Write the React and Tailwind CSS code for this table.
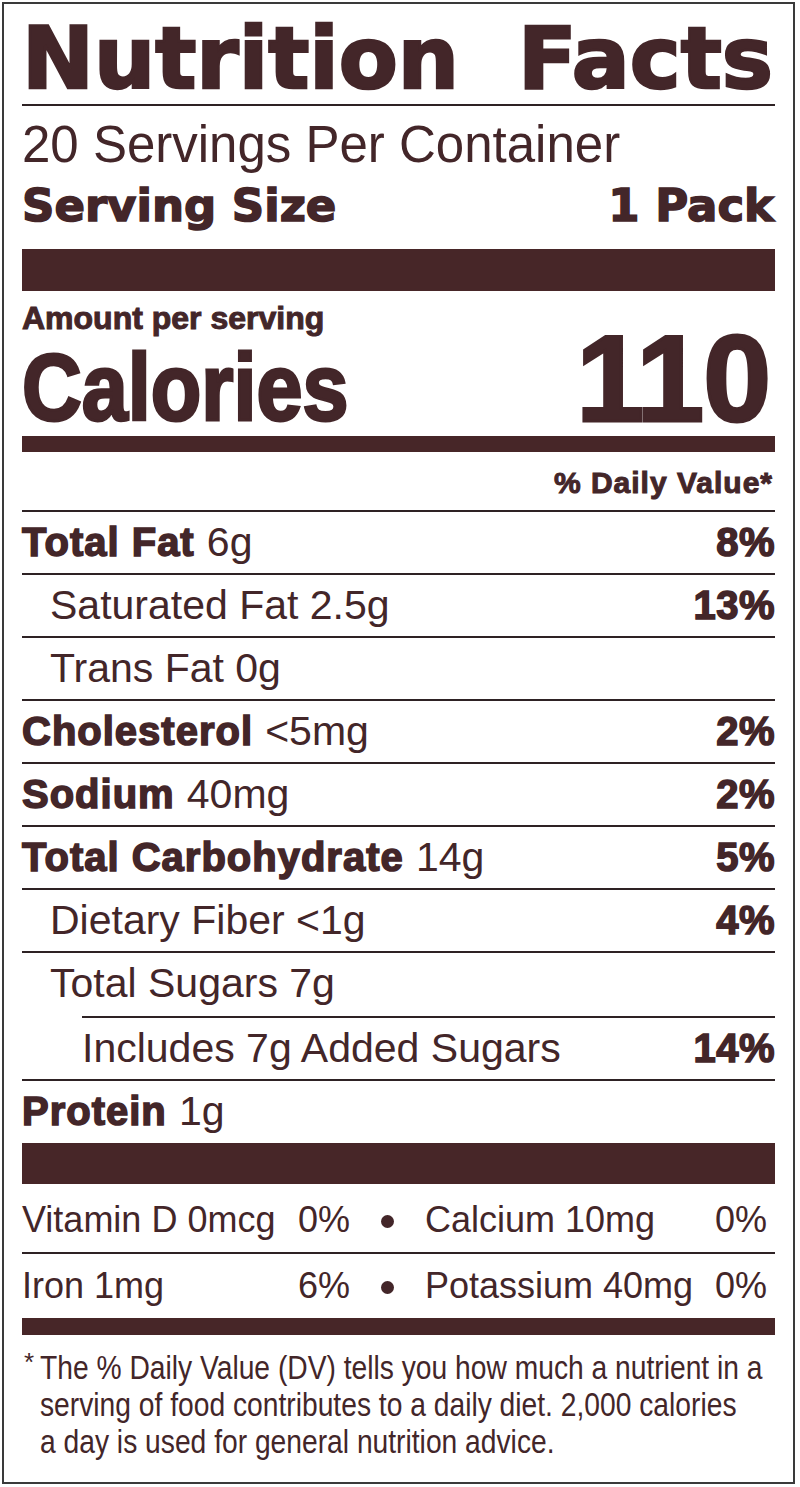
import React from 'react';

const rows = [
  { bold: 'Total Fat', text: '6g', dv: '8%', indent: 0 },
  { text: 'Saturated Fat 2.5g', dv: '13%', indent: 1 },
  { text: 'Trans Fat 0g', indent: 1 },
  { bold: 'Cholesterol', text: '<5mg', dv: '2%', indent: 0 },
  { bold: 'Sodium', text: '40mg', dv: '2%', indent: 0 },
  { bold: 'Total Carbohydrate', text: '14g', dv: '5%', indent: 0 },
  { text: 'Dietary Fiber <1g', dv: '4%', indent: 1 },
  { text: 'Total Sugars 7g', indent: 1, shortLine: true },
  { text: 'Includes 7g Added Sugars', dv: '14%', indent: 2 },
  { bold: 'Protein', text: '1g', indent: 0, last: true },
];

const indents = ['pl-0', 'pl-[28px]', 'pl-[60px]'];

function NutrientRow({ row }) {
  const line = row.last || row.shortLine ? '' : 'border-b-2 border-[#2e2224]';
  return (
    <>
      <div className={`flex items-start justify-between ${row.last ? 'h-[62px]' : 'h-[63px]'} ${line}`}>
        <div className={`${indents[row.indent]} leading-[61px] whitespace-nowrap`}>
          {row.bold && (
            <span className="text-[40px] font-bold tracking-[1px] [-webkit-text-stroke:1.5px_#432629]">
              {row.bold}{' '}
            </span>
          )}
          <span className="text-[41px]">{row.text}</span>
        </div>
        {row.dv && (
          <span className="leading-[61px] text-[40px] font-bold tracking-[0.5px] [-webkit-text-stroke:1.5px_#432629]">
            {row.dv}
          </span>
        )}
      </div>
      {row.shortLine && <div className="ml-[60px] h-[2px] bg-[#2e2224]" />}
    </>
  );
}

function Bullet() {
  return (
    <div className="flex w-[75px] items-center justify-center">
      <div className="mt-[2px] h-[13px] w-[13px] rounded-full bg-[#432629]" />
    </div>
  );
}

export default function App() {
  return (
    <div className="min-h-screen bg-white">
      <div className="ml-[2px] mt-[2px] h-[1482px] w-[793px] overflow-hidden border-2 border-[#3a3a3a] px-[18px] font-['Liberation_Sans',sans-serif] text-[#432629]">
        {/* heading */}
        <div className="flex justify-between border-b-2 border-[#2e2224] pt-[8px] font-['DejaVu_Sans',sans-serif] text-[86px] font-bold leading-[92px] [-webkit-text-stroke:2.5px_#432629]">
          <span>Nutrition</span>
          <span className="pr-[2px]">Facts</span>
        </div>

        <div className="pt-[9px] pb-[12px]">
          <div className="text-[51px] leading-[60px] whitespace-nowrap">20 Servings Per Container</div>
          <div className="flex justify-between font-['DejaVu_Sans',sans-serif] text-[45px] font-bold leading-[62px] [-webkit-text-stroke:1.5px_#432629]">
            <span>Serving Size</span>
            <span className="pr-[1px]">1 Pack</span>
          </div>
        </div>

        <div className="h-[42px] bg-[#472628]" />

        <div className="pt-[8px] text-[32px] font-bold leading-[38px] [-webkit-text-stroke:1px_#432629]">Amount per serving</div>
        <div className="flex h-[99px] items-start justify-between">
          <span className="origin-left scale-x-[0.88] pt-[4px] text-[94px] font-bold leading-[94px] [-webkit-text-stroke:3px_#432629]">
            Calories
          </span>
          <span className="pr-[5px] text-[122px] font-bold leading-[84px] tracking-[-1px] [-webkit-text-stroke:3px_#432629]">
            110
          </span>
        </div>

        <div className="h-[16px] bg-[#472628]" />

        <div className="border-b-2 border-[#2e2224] pt-[4px] pr-[2px] text-right text-[30px] font-bold leading-[54px] tracking-[1px] [-webkit-text-stroke:1px_#432629]">
          % Daily Value*
        </div>

        {rows.map((row) => (
          <NutrientRow key={row.text} row={row} />
        ))}

        <div className="h-[41px] bg-[#472628]" />

        {/* vitamins and minerals */}
        <div className="flex border-b-2 border-[#2e2224] pt-[4px] text-[36px] leading-[64px] whitespace-nowrap">
          <div className="flex w-[328px] justify-between">
            <span>Vitamin D 0mcg</span>
            <span>0%</span>
          </div>
          <Bullet />
          <div className="flex w-[342px] justify-between">
            <span>Calcium 10mg</span>
            <span>0%</span>
          </div>
        </div>
        <div className="flex text-[36px] leading-[64px] whitespace-nowrap">
          <div className="flex w-[328px] justify-between">
            <span>Iron 1mg</span>
            <span>6%</span>
          </div>
          <Bullet />
          <div className="flex w-[342px] justify-between">
            <span>Potassium 40mg</span>
            <span>0%</span>
          </div>
        </div>

        <div className="h-[17px] bg-[#472628]" />

        <div className="flex overflow-hidden pt-[14px] text-[34px] leading-[37px] whitespace-nowrap">
          <span className="w-[18px] shrink-0 pl-[2px] text-[26px] leading-[26px]">*</span>
          <p className="origin-left scale-x-[0.83]">
            The % Daily Value (DV) tells you how much a nutrient in a
            <br />
            serving of food contributes to a daily diet. 2,000 calories
            <br />
            a day is used for general nutrition advice.
          </p>
        </div>
      </div>
    </div>
  );
}
